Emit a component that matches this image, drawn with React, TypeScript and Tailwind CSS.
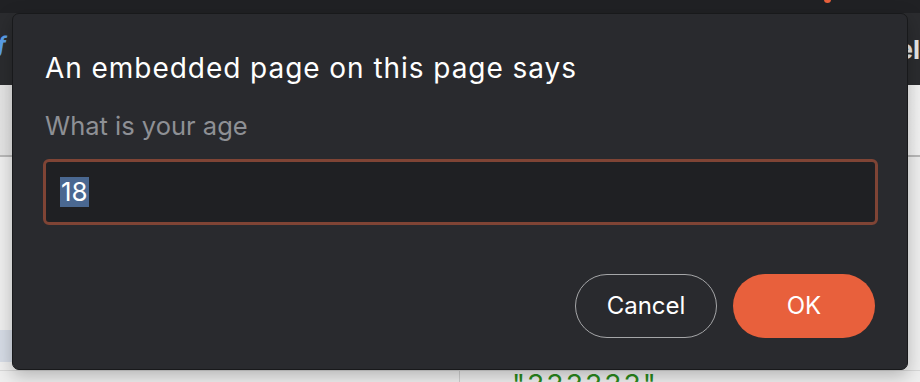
import { useEffect, useRef } from 'react'

const font = { fontFamily: 'Inter, "Noto Sans", sans-serif' }

function BackgroundPage() {
  return (
    <div className="flex h-full w-full flex-col">
      {/* Browser top strip */}
      <div className="relative h-[13px] shrink-0 bg-[#202124]">
        <span className="absolute left-[824px] top-[-4px] h-[7px] w-[7px] rounded-full bg-[#e8603c]" />
      </div>

      {/* Dark toolbar */}
      <div className="flex h-[72px] shrink-0 items-start justify-between bg-[#2b2c2f]">
        <span className="ml-[-3px] mt-[20px] text-[22px] font-bold italic leading-none text-[#5a9ee8]" style={font}>
          f
        </span>
        <span className="mt-[24px] text-[26px] font-bold leading-none text-[#e8e8e8]" style={font}>
          el
        </span>
      </div>

      {/* Light page content */}
      <div className="flex flex-1 flex-col bg-[#efefef]">
        <div className="h-[72px] shrink-0 border-b-2 border-[#b9b9b9] bg-gradient-to-r from-[#e4e4e4] to-[#f2f2f2]" />
        <div className="flex flex-1 flex-col justify-end">
          <div className="mb-[8px] h-[32px] w-[12px] bg-[#d6dce6]" />
          <div className="flex h-[12px] items-start border-t border-[#d8d8d8]">
            <div className="h-full w-[460px] border-r border-[#cfcfcf]" />
            <span className="ml-[52px] text-[28px] leading-none tracking-[2px] text-[#2a8a1c]" style={font}>
              "333333"
            </span>
          </div>
        </div>
      </div>
    </div>
  )
}

function PromptDialog() {
  const inputRef = useRef<HTMLInputElement>(null)

  useEffect(() => {
    inputRef.current?.focus()
    inputRef.current?.select()
  }, [])

  return (
    <div
      className="absolute left-[12px] top-[13px] flex h-[357px] w-[896px] flex-col rounded-[7px] border border-[#18191b] bg-[#292a2e] px-[32px] shadow-[0_6px_18px_rgba(0,0,0,0.25)]"
      style={font}
    >
      <h1 className="mt-[36px] text-[28px] font-normal leading-[36px] tracking-[0.95px] text-white">
        An embedded page on this page says
      </h1>
      <p className="mt-[24px] text-[25.5px] leading-[32px] text-[#8e9095]">What is your age</p>

      <div className="mt-[17px] -ml-[2px] flex h-[66px] w-[835px] items-center rounded-[6px] border-[3px] border-[#7f4435] bg-[#1f2023] px-[14px]">
        <span className="bg-[#4a6891] px-px text-[26px] leading-[30px] text-white">18</span>
      </div>

      <div className="mt-[49px] flex justify-end gap-[16px]">
        <button className="h-[64px] w-[142px] rounded-full border border-[#a5a6a8] text-[24px] text-white">
          Cancel
        </button>
        <button className="h-[64px] w-[142px] rounded-full bg-[#e8603c] text-[24px] text-white">
          OK
        </button>
      </div>
    </div>
  )
}

export default function App() {
  return (
    <div className="relative h-[382px] w-[920px] overflow-hidden">
      <BackgroundPage />
      <PromptDialog />
    </div>
  )
}
